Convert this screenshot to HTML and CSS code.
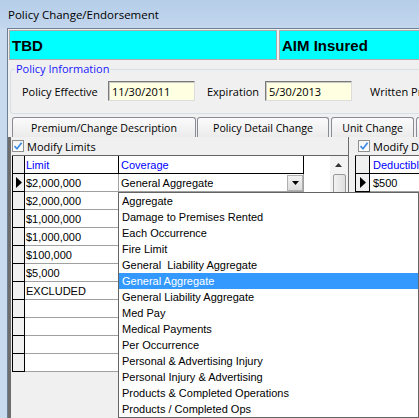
FILE: index.html
```html
<!DOCTYPE html>
<html>
<head>
<meta charset="utf-8">
<title>Policy Change/Endorsement</title>
<link rel="stylesheet" href="styles.css">
</head>
<body>
<div class="window">
  <div class="titlebar">Policy Change/Endorsement</div>
  <div class="frame">
    <div class="client">
      <div class="banner">
        <div class="banner-box tbd">TBD</div>
        <div class="banner-box aim">AIM Insured</div>
      </div>

      <fieldset class="group">
        <legend>Policy Information</legend>
        <div class="group-row">
          <span class="lbl lbl-eff">Policy Effective</span>
          <span class="tb">11/30/2011</span>
          <span class="lbl lbl-exp">Expiration</span>
          <span class="tb">5/30/2013</span>
          <span class="lbl lbl-wr">Written Pr</span>
        </div>
      </fieldset>

      <div class="tabs">
        <div class="tab t1">Premium/Change Description</div>
        <div class="tab t2">Policy Detail Change</div>
        <div class="tab t3">Unit Change</div>
        <div class="tab t4"></div>
      </div>

      <div class="page">
        <div class="section left">
          <div class="check-row">
            <span class="checkbox"><svg width="10" height="10" viewBox="0 0 10 10"><path d="M1.5 5.2 L4 7.8 L8.6 1.8" fill="none" stroke="#3a8ae6" stroke-width="1.7"/></svg></span>
            <span class="check-label">Modify Limits</span>
          </div>
          <div class="grid">
            <div class="grid-main">
              <div class="row head">
                <div class="rh"></div>
                <div class="cell c-limit">Limit</div>
                <div class="cell c-cov">Coverage</div>
                <div class="c-blank"></div>
              </div>
              <div class="row">
                <div class="rh"><svg width="6" height="11" viewBox="0 0 6 11"><polygon points="0,0 6,5.5 0,11" fill="#000"/></svg></div>
                <div class="cell c-limit">$2,000,000</div>
                <div class="cell c-cov combo">
                  <span class="combo-text">General Aggregate</span>
                  <span class="combo-btn"><svg width="7" height="4" viewBox="0 0 7 4"><polygon points="0,0 7,0 3.5,4" fill="#000"/></svg></span>
                </div>
                <div class="c-blank"></div>
              </div>
              <div class="row"><div class="rh"></div><div class="cell c-limit">$2,000,000</div><div class="cell c-cov"></div><div class="c-blank"></div></div>
              <div class="row"><div class="rh"></div><div class="cell c-limit">$1,000,000</div><div class="cell c-cov"></div><div class="c-blank"></div></div>
              <div class="row"><div class="rh"></div><div class="cell c-limit">$1,000,000</div><div class="cell c-cov"></div><div class="c-blank"></div></div>
              <div class="row"><div class="rh"></div><div class="cell c-limit">$100,000</div><div class="cell c-cov"></div><div class="c-blank"></div></div>
              <div class="row"><div class="rh"></div><div class="cell c-limit">$5,000</div><div class="cell c-cov"></div><div class="c-blank"></div></div>
              <div class="row"><div class="rh"></div><div class="cell c-limit">EXCLUDED</div><div class="cell c-cov"></div><div class="c-blank"></div></div>
              <div class="row"><div class="rh"></div><div class="cell c-limit"></div><div class="cell c-cov"></div><div class="c-blank"></div></div>
              <div class="row"><div class="rh"></div><div class="cell c-limit"></div><div class="cell c-cov"></div><div class="c-blank"></div></div>
              <div class="row"><div class="rh"></div><div class="cell c-limit"></div><div class="cell c-cov"></div><div class="c-blank"></div></div>
              <div class="row"><div class="rh"></div><div class="cell c-limit"></div><div class="cell c-cov"></div><div class="c-blank"></div></div>
            </div>
            <div class="vscroll">
              <div class="sb-btn"><svg width="7" height="4" viewBox="0 0 7 4"><polygon points="3.5,0 7,4 0,4" fill="#333"/></svg></div>
              <div class="sb-thumb"></div>
            </div>
          </div>
        </div>

        <div class="section right">
          <div class="check-row">
            <span class="checkbox"><svg width="10" height="10" viewBox="0 0 10 10"><path d="M1.5 5.2 L4 7.8 L8.6 1.8" fill="none" stroke="#3a8ae6" stroke-width="1.7"/></svg></span>
            <span class="check-label">Modify De</span>
          </div>
          <div class="grid grid-r">
            <div class="grid-main">
              <div class="row head">
                <div class="rh rh-r"></div>
                <div class="cell c-ded">Deductible</div>
              </div>
              <div class="row">
                <div class="rh rh-r"><svg width="6" height="11" viewBox="0 0 6 11"><polygon points="0,0 6,5.5 0,11" fill="#000"/></svg></div>
                <div class="cell c-ded">$500</div>
              </div>
              <div class="row"><div class="rh rh-r"></div><div class="cell c-ded"></div></div>
              <div class="row"><div class="rh rh-r"></div><div class="cell c-ded"></div></div>
            </div>
          </div>
        </div>
      </div>

      <div class="dropdown">
        <div class="item">Aggregate</div>
        <div class="item">Damage to Premises Rented</div>
        <div class="item">Each Occurrence</div>
        <div class="item">Fire Limit</div>
        <div class="item">General&nbsp; Liability Aggregate</div>
        <div class="item selected">General Aggregate</div>
        <div class="item">General Liability Aggregate</div>
        <div class="item">Med Pay</div>
        <div class="item">Medical Payments</div>
        <div class="item">Per Occurrence</div>
        <div class="item">Personal &amp; Advertising Injury</div>
        <div class="item">Personal Injury &amp; Advertising</div>
        <div class="item">Products &amp; Completed Operations</div>
        <div class="item">Products / Completed Ops</div>
      </div>
    </div>
  </div>
</div>
</body>
</html>
```

FILE: styles.css
```css
* { box-sizing: border-box; }
html, body { margin: 0; padding: 0; }
body {
  width: 419px;
  height: 418px;
  overflow: hidden;
  background: #c4d7ed;
  font-family: "Open Sans", "Noto Sans", sans-serif;
  font-size: 11px;
  color: #000;
}
.window { width: 419px; height: 418px; display: flex; flex-direction: column; }
.titlebar {
  height: 28px;
  flex: none;
  padding-left: 8px;
  display: flex;
  align-items: center;
  font-size: 11.5px;
  background: linear-gradient(#b6cee9, #c2d6ed);
}
.frame { flex: 1; min-height: 0; display: flex; padding-left: 7px; background: linear-gradient(90deg, #c8daee, #b9cde4); }
.client {
  flex: 1;
  min-width: 0;
  position: relative;
  overflow: hidden;
  background: #f0f0f0;
  border-left: 1px solid #6f7f93;
  border-top: 1px solid #6f7f93;
  display: flex;
  flex-direction: column;
}

/* banner */
.banner { display: flex; flex: none; height: 30px; margin: 1px 0 0 1px; }
.banner-box {
  background: #00ffff;
  border: 1px solid #aaaaaa;
  font-family: "Liberation Sans", Arial, sans-serif;
  font-weight: bold;
  font-size: 15px;
  display: flex;
  align-items: center;
  padding-left: 2px;
  padding-top: 1px;
}
.tbd { width: 268px; flex: none; }
.aim { width: 200px; margin-left: 2px; flex: none; }

/* group box */
.group {
  flex: none;
  margin: 2px 0 0 2px;
  padding: 0;
  width: 480px;
  min-inline-size: 0;
  border: 1px solid #d5dfe5;
  border-radius: 3px;
}
.group legend {
  margin-left: 4px;
  padding: 0 1px;
  line-height: 14px;
  color: #1818ff;
}
.group-row { display: flex; align-items: center; padding: 5px 0 12px 11px; }
.lbl { white-space: nowrap; }
.lbl-eff { width: 86px; }
.lbl-exp { width: 58px; margin-left: 12px; }
.lbl-wr { margin-left: 18px; }
.tb {
  width: 87px;
  height: 20px;
  flex: none;
  background: #ffffe1;
  border: 1px solid;
  border-color: #7a7a7a #dcdcdc #dcdcdc #7a7a7a;
  box-shadow: inset 1px 1px 0 #c8c8c8;
  padding-left: 3px;
  display: flex;
  align-items: center;
}

/* tabs */
.tabs { display: flex; flex: none; height: 20px; margin-top: 3px; padding-left: 4px; }
.tab {
  flex: none;
  height: 20px;
  border: 1px solid #898c95;
  border-bottom: none;
  border-radius: 3px 3px 0 0;
  background: linear-gradient(#fbfbfb, #ebebeb);
  display: flex;
  align-items: center;
  justify-content: center;
  white-space: nowrap;
  font-size: 10.6px;
}
.t1 { width: 184px; margin-right: 1px; }
.t2 { width: 132px; margin-right: 2px; }
.t3 { width: 83px; margin-right: 2px; }
.t4 { width: 40px; }

/* page */
.page { flex: 1; display: flex; min-height: 0; }
.section { display: flex; flex-direction: column; }
.left { width: 340px; flex: none; border-left: 3px solid #6d6d6d; }
.right { flex: 1; min-width: 0; border-left: 1px solid #6d6d6d; }
.check-row { height: 18px; display: flex; align-items: center; padding-left: 1px; white-space: nowrap; }
.right .check-row { padding-left: 9px; }
.checkbox {
  width: 12px;
  height: 12px;
  flex: none;
  border: 1px solid #8e8f8f;
  background: linear-gradient(#f4f4f4, #ffffff);
  display: flex;
  align-items: center;
  justify-content: center;
}
.check-label { margin-left: 3px; }

.grid {
  display: flex;
  margin-left: 1px;
  border-top: 1px solid #646464;
  font-family: "Liberation Sans", Arial, sans-serif;
  font-size: 11px;
}
.grid-main { width: 318px; flex: none; }
.row { display: flex; height: 18px; }
.rh {
  width: 13px;
  flex: none;
  background: #f0f0f0;
  border-left: 1px solid #000;
  border-right: 1px solid #000;
  border-bottom: 1px solid #000;
  display: flex;
  align-items: center;
  justify-content: center;
}
.cell {
  flex: none;
  background: #fff;
  border-right: 1px solid #a0a0a0;
  border-bottom: 1px solid #a0a0a0;
  display: flex;
  align-items: center;
  white-space: nowrap;
  overflow: hidden;
}
.head .cell { color: #0000ff; border-color: #000; }
.c-limit { width: 94px; padding-left: 1px; }
.c-cov { width: 185px; padding-left: 2px; }
.c-blank { width: 26px; flex: none; background: #fff; }
.combo { justify-content: space-between; }
.combo-btn {
  width: 16px;
  height: 16px;
  background: linear-gradient(#f2f2f2, #dcdcdc);
  border: 1px solid #b0b0b0;
  display: flex;
  align-items: center;
  justify-content: center;
}
.vscroll { width: 17px; flex: none; background: #f3f3f3; display: flex; flex-direction: column; }
.sb-btn { height: 17px; display: flex; align-items: center; justify-content: center; }
.sb-thumb {
  height: 60px;
  margin: 1px 1px 0 3px;
  border: 1px solid #999;
  border-radius: 2px;
  background: linear-gradient(90deg, #f2f2f2, #dedede);
}

.grid-r { margin-left: 6px; }
.grid-r .grid-main { width: 80px; }
.rh-r { width: 15px; }
.c-ded { width: 60px; padding-left: 3px; border-right: none; }

/* dropdown list */
.dropdown {
  position: absolute;
  left: 110px;
  top: 163px;
  width: 301px;
  height: 226px;
  background: #fff;
  border: 1px solid #646464;
  font-family: "Liberation Sans", Arial, sans-serif;
  font-size: 11px;
}
.item {
  height: 16px;
  line-height: 16px;
  padding-left: 3px;
  white-space: nowrap;
}
.item.selected { background: #3399ff; color: #fff; }
```
